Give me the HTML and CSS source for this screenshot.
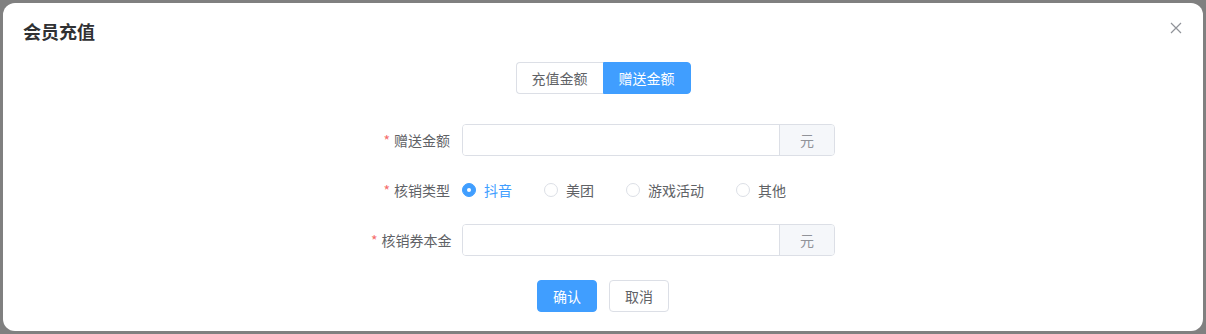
FILE: index.html
```html
<!DOCTYPE html>
<html lang="zh-CN">
<head>
  <meta charset="UTF-8" />
  <title>会员充值</title>
  <link rel="stylesheet" href="styles.css">
</head>
<body>
  <div class="dialog">
    <div class="dialog-header">
      <span class="dialog-title">会员充值</span>
      <button class="dialog-close" aria-label="关闭">
        <svg width="12" height="12" viewBox="0 0 12 12">
          <path d="M1 1 L11 11 M11 1 L1 11" stroke="#909399" stroke-width="1.2" fill="none" />
        </svg>
      </button>
    </div>
    <div class="dialog-body">
      <div class="tabs">
        <button class="tab">充值金额</button>
        <button class="tab active">赠送金额</button>
      </div>
      <form class="form">
        <div class="form-item">
          <label class="form-label"><span class="req">*</span>赠送金额</label>
          <div class="input-group">
            <input class="input" type="text" />
            <div class="input-append">元</div>
          </div>
        </div>
        <div class="form-item">
          <label class="form-label"><span class="req">*</span>核销类型</label>
          <div class="radio-group">
            <label class="radio checked"><span class="radio-dot"></span>抖音</label>
            <label class="radio"><span class="radio-dot"></span>美团</label>
            <label class="radio"><span class="radio-dot"></span>游戏活动</label>
            <label class="radio"><span class="radio-dot"></span>其他</label>
          </div>
        </div>
        <div class="form-item">
          <label class="form-label"><span class="req">*</span>核销券本金</label>
          <div class="input-group">
            <input class="input" type="text" />
            <div class="input-append">元</div>
          </div>
        </div>
      </form>
      <div class="footer">
        <button class="btn btn-primary">确认</button>
        <button class="btn">取消</button>
      </div>
    </div>
  </div>
</body>
</html>
```

FILE: styles.css
```css
body {
  margin: 0;
  padding: 3px;
  background: #808080;
  font-family: "Noto Sans CJK SC", "Noto Sans", sans-serif;
  font-size: 14px;
  color: #606266;
  overflow: hidden;
}
.dialog {
  position: relative;
  width: 1200px;
  height: 328px;
  background: #fff;
  border-radius: 12px;
  box-sizing: border-box;
}
.dialog-header {
  padding: 16px 20px 0;
}
.dialog-title {
  display: block;
  font-size: 18px;
  line-height: 24px;
  font-weight: bold;
  color: #303133;
}
.dialog-close {
  position: absolute;
  top: 19px;
  right: 21px;
  width: 12px;
  height: 12px;
  padding: 0;
  border: none;
  background: none;
  cursor: pointer;
  display: flex;
}
.dialog-body {
  display: flex;
  flex-direction: column;
  align-items: center;
  padding-top: 19px;
}
.tabs {
  display: flex;
  margin-bottom: 30px;
}
.tab {
  height: 32px;
  padding: 0 15px;
  border: 1px solid #dcdfe6;
  background: #fff;
  color: #606266;
  font-family: inherit;
  font-size: 14px;
  line-height: 30px;
  cursor: pointer;
}
.tab:first-child {
  border-radius: 4px 0 0 4px;
  border-right: none;
}
.tab:last-child {
  border-radius: 0 4px 4px 0;
}
.tab.active {
  background: #409eff;
  border-color: #409eff;
  color: #fff;
}
.form {
  width: 464px;
}
.form-item {
  display: flex;
  align-items: center;
  height: 32px;
  margin-bottom: 18px;
}
.form-item:last-child {
  margin-bottom: 0;
}
.form-label {
  width: 91px;
  padding-right: 12px;
  box-sizing: border-box;
  text-align: right;
  white-space: nowrap;
  color: #606266;
  line-height: 32px;
}
.req {
  color: #f56c6c;
  margin-right: 4px;
}
.input-group {
  display: flex;
  width: 373px;
  height: 32px;
  border: 1px solid #dcdfe6;
  border-radius: 4px;
  box-sizing: border-box;
  overflow: hidden;
}
.input {
  flex: 1;
  min-width: 0;
  border: none;
  outline: none;
  padding: 0 15px;
  font-family: inherit;
  font-size: 14px;
}
.input-append {
  width: 54px;
  border-left: 1px solid #dcdfe6;
  background: #f5f7fa;
  color: #909399;
  display: flex;
  align-items: center;
  justify-content: center;
}
.radio-group {
  display: flex;
  align-items: center;
}
.radio {
  display: flex;
  align-items: center;
  margin-right: 32px;
  color: #606266;
  cursor: pointer;
}
.radio-dot {
  width: 14px;
  height: 14px;
  border: 1px solid #dcdfe6;
  border-radius: 50%;
  box-sizing: border-box;
  margin-right: 8px;
  background: #fff;
  position: relative;
}
.radio.checked {
  color: #409eff;
}
.radio.checked .radio-dot {
  background: #409eff;
  border-color: #409eff;
}
.radio.checked .radio-dot::after {
  content: "";
  position: absolute;
  left: 50%;
  top: 50%;
  width: 4px;
  height: 4px;
  border-radius: 50%;
  background: #fff;
  transform: translate(-50%, -50%);
}
.footer {
  display: flex;
  gap: 12px;
  margin-top: 24px;
}
.btn {
  height: 32px;
  padding: 0 15px;
  border: 1px solid #dcdfe6;
  border-radius: 4px;
  background: #fff;
  color: #606266;
  font-family: inherit;
  font-size: 14px;
  cursor: pointer;
}
.btn-primary {
  background: #409eff;
  border-color: #409eff;
  color: #fff;
}
```
